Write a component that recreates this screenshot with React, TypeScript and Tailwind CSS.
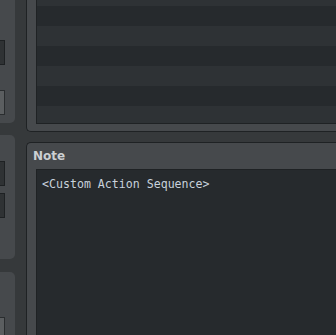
export default function App() {
  const rows = Array.from({ length: 8 });
  return (
    <div className="w-[336px] h-[335px] overflow-hidden bg-[#36393b] flex">
      {/* left column */}
      <div className="w-[15px] shrink-0 flex flex-col gap-[12px]">
        <div className="h-[123px] shrink-0 bg-[#46494c] rounded-br-[5px] flex flex-col pt-[40px] gap-[25px]">
          <div className="w-[5px] h-[25px] bg-[#2f3234] border-y border-r border-[#1e2123]" />
          <div className="w-[5px] h-[25px] bg-[#5b5e60] border-y border-r border-[#2a2d2f] rounded-r-[1px]" />
        </div>
        <div className="h-[124px] shrink-0 bg-[#46494c] rounded-r-[5px] flex flex-col pt-[26px] gap-[7px]">
          <div className="w-[5px] h-[25px] bg-[#2f3234] border-y border-r border-[#1e2123]" />
          <div className="w-[5px] h-[25px] bg-[#2f3234] border-y border-r border-[#1e2123]" />
        </div>
        <div className="flex-1 mt-[1px] bg-[#46494c] rounded-tr-[5px] flex flex-col pt-[45px]">
          <div className="w-[5px] h-[40px] bg-[#5b5e60] border-t border-r border-[#2a2d2f] rounded-tr-[1px]" />
        </div>
      </div>
      {/* gap */}
      <div className="w-[11px] shrink-0" />
      {/* right column */}
      <div className="flex-1 min-w-0 flex flex-col gap-[10px]">
        <div className="h-[132px] shrink-0 bg-[#46494c] border-l border-b border-[#1f2224] rounded-bl-[5px] pl-[9px] pb-[7px] flex flex-col">
          <div className="flex-1 border-l border-b border-[#1f2224] overflow-hidden flex flex-col">
            <div className="flex flex-col mt-[-14px]">
              {rows.map((_, i) => (
                <div
                  key={i}
                  className={
                    i % 2 === 0
                      ? "h-[20px] shrink-0 bg-[#2e3235]"
                      : "h-[20px] shrink-0 bg-[#262a2d]"
                  }
                />
              ))}
            </div>
          </div>
        </div>
        <div className="flex-1 bg-[#46494c] border-l border-t border-[#1f2224] rounded-tl-[5px] flex flex-col">
          <div className="h-[26px] shrink-0 flex items-center pl-[6px]">
            <span
              className="text-[12px] font-bold text-[#ccd0d3] leading-none"
              style={{ fontFamily: '"DejaVu Sans", sans-serif' }}
            >
              Note
            </span>
          </div>
          <div className="flex-1 ml-[9px] border-l border-t border-[#1f2224] bg-[#262a2d] pl-[5px] pt-[0px]">
            <span
              className="text-[11.6px] text-[#c8d2dc] leading-[16px] whitespace-pre"
              style={{ fontFamily: '"DejaVu Sans Mono", monospace' }}
            >
              {"<Custom Action Sequence>"}
            </span>
          </div>
        </div>
      </div>
    </div>
  );
}
